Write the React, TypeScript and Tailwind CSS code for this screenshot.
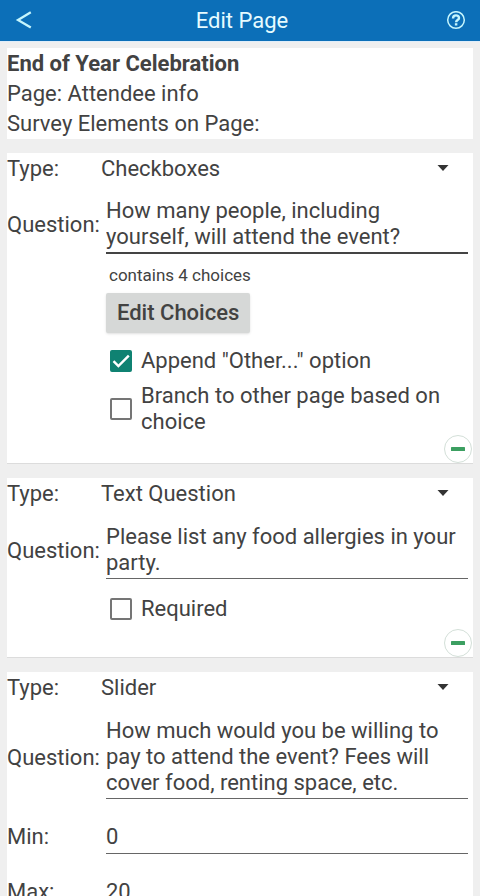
import { useState } from "react";
import type { ReactNode } from "react";

const TYPES = ["Checkboxes", "Text Question", "Slider"];

interface TypeRowProps {
  id: string;
  initial: string;
}

const TypeRow = ({ id, initial }: TypeRowProps) => {
  const [type, setType] = useState(initial);

  return (
    <div className="flex h-8 items-center">
      <label htmlFor={id} className="w-[94px] shrink-0">
        Type:
      </label>
      <div className="relative flex-1">
        <select
          id={id}
          value={type}
          onChange={(e) => setType(e.target.value)}
          className="block h-8 w-full appearance-none bg-transparent outline-none"
        >
          {TYPES.map((name) => (
            <option key={name}>{name}</option>
          ))}
        </select>
        <svg
          viewBox="0 0 12 6"
          className="pointer-events-none absolute right-6 top-3 h-1.5 w-3"
          fill="#333333"
          aria-hidden="true"
        >
          <path d="M0.5 0h11L6 6z" />
        </svg>
      </div>
    </div>
  );
};

interface QuestionRowProps {
  id: string;
  text: string;
  rows: number;
  active?: boolean;
}

const QuestionRow = ({ id, text, rows, active }: QuestionRowProps) => (
  <div className={`flex items-center pr-[5px] ${active ? "mt-[11px]" : "mt-3"}`}>
    <label htmlFor={id} className="w-[99px] shrink-0">
      Question:
    </label>
    <textarea
      id={id}
      rows={rows}
      defaultValue={text}
      className={`block min-w-0 flex-1 resize-none overflow-hidden bg-transparent py-0.5 outline-none ${
        active ? "border-b-2 border-[#444444]" : "border-b border-[#666666]"
      }`}
    />
  </div>
);

interface NumberRowProps {
  id: string;
  label: string;
  value: string;
}

const NumberRow = ({ id, label, value }: NumberRowProps) => (
  <div className="mt-5 flex items-center pr-[5px]">
    <label htmlFor={id} className="w-[99px] shrink-0">
      {label}
    </label>
    <input
      id={id}
      type="text"
      inputMode="numeric"
      defaultValue={value}
      className="block h-[35px] min-w-0 flex-1 border-b border-[#666666] bg-transparent outline-none"
    />
  </div>
);

interface CheckOptionProps {
  children: ReactNode;
  checked?: boolean;
}

const CheckOption = ({ children, checked }: CheckOptionProps) => (
  <label className="flex min-h-8 items-center gap-[9px] pl-1">
    <span className="relative size-[22px] shrink-0">
      <input
        type="checkbox"
        defaultChecked={checked}
        className="peer block size-[22px] appearance-none rounded-[2px] border-2 border-[#757575] bg-white checked:border-[#0f8272] checked:bg-[#0f8272]"
      />
      <svg
        viewBox="0 0 22 22"
        className="pointer-events-none absolute inset-0 hidden size-[22px] peer-checked:block"
        fill="none"
        stroke="#ffffff"
        strokeWidth="2.4"
        aria-hidden="true"
      >
        <path d="M3.5 11.2l4.9 4.9L18.8 5.6" />
      </svg>
    </span>
    <span>{children}</span>
  </label>
);

const RemoveButton = () => (
  <button
    type="button"
    aria-label="Remove element"
    className="mr-px flex size-7 items-center justify-center self-end rounded-full border border-[#d3dfd8] bg-white"
  >
    <svg viewBox="0 0 14 4" className="h-1 w-3.5" fill="#3c9f61" aria-hidden="true">
      <rect width="14" height="4" rx="0.6" />
    </svg>
  </button>
);

const Card = ({ children }: { children: ReactNode }) => (
  <section className="flex flex-col border-b border-[#dcdcdc] bg-white">{children}</section>
);

export default function App() {
  return (
    <div className="flex h-screen flex-col overflow-hidden bg-[#efefef] font-[Roboto,sans-serif] text-[22px] leading-[26px] text-[#424242]">
      <header className="flex h-[41px] shrink-0 items-center justify-between bg-[#0c6fb8] px-3.5 text-[#e6fbff]">
        <button type="button" aria-label="Back" className="flex w-6 items-center">
          <svg
            viewBox="0 0 20 20"
            className="size-5"
            fill="none"
            stroke="#c6f6fd"
            strokeWidth="2.3"
            aria-hidden="true"
          >
            <path d="M16.8 1.2L4 9L16.8 16.6" />
          </svg>
        </button>
        <h1 className="text-[22px]">Edit Page</h1>
        <button type="button" aria-label="Help" className="flex w-5 items-center">
          <svg
            viewBox="0 0 20 20"
            className="size-5"
            fill="none"
            stroke="#c6f6fd"
            strokeWidth="1.5"
            aria-hidden="true"
          >
            <circle cx="10" cy="9" r="8.3" />
            <path d="M7 7.4C7 3.4 13 3.6 13 6.9c0 2.2-2.9 2.1-2.9 4.3" strokeWidth="2.4" />
            <path d="M10.1 12.2v2.3" strokeWidth="2.5" />
          </svg>
        </button>
      </header>

      <main className="flex flex-1 flex-col gap-3.5 overflow-y-auto border-t border-[#dfeefa] px-[7px] pt-1.5 [scrollbar-width:none]">
        <section className="bg-white pt-px leading-[30px]">
          <h2 className="font-bold">End of Year Celebration</h2>
          <p>Page: Attendee info</p>
          <p>Survey Elements on Page:</p>
        </section>

        <Card>
          <TypeRow id="type-1" initial="Checkboxes" />
          <QuestionRow
            id="question-1"
            text="How many people, including yourself, will attend the event?"
            rows={2}
            active
          />
          <div className="flex flex-col pl-[99px]">
            <p className="mt-2 pl-[3px] text-[17px]">contains 4 choices</p>
            <button
              type="button"
              className="mt-[5px] h-10 self-start rounded-[2px] bg-[#d6d8d7] px-[11px] font-medium shadow-sm"
            >
              Edit Choices
            </button>
            <div className="mt-3 flex flex-col gap-1.5">
              <CheckOption checked>Append "Other..." option</CheckOption>
              <CheckOption>Branch to other page based on choice</CheckOption>
            </div>
          </div>
          <RemoveButton />
        </Card>

        <Card>
          <TypeRow id="type-2" initial="Text Question" />
          <QuestionRow
            id="question-2"
            text="Please list any food allergies in your party."
            rows={2}
          />
          <div className="mb-1 mt-3.5 pl-[99px]">
            <CheckOption>Required</CheckOption>
          </div>
          <RemoveButton />
        </Card>

        <Card>
          <TypeRow id="type-3" initial="Slider" />
          <QuestionRow
            id="question-3"
            text="How much would you be willing to pay to attend the event? Fees will cover food, renting space, etc."
            rows={3}
          />
          <NumberRow id="min" label="Min:" value="0" />
          <NumberRow id="max" label="Max:" value="20" />
        </Card>
      </main>
    </div>
  );
}
